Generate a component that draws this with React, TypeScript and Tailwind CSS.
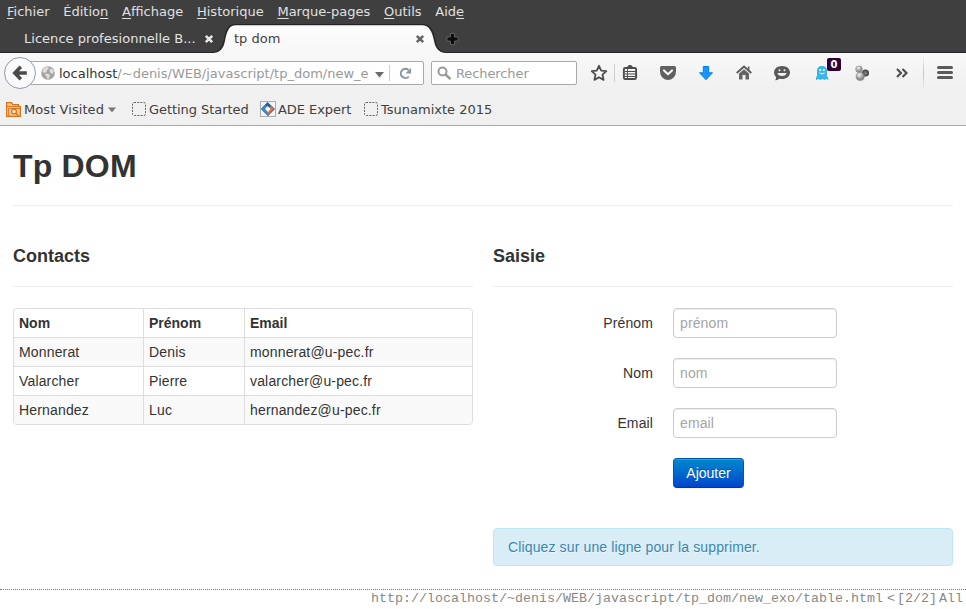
import React from "react";

const ui = "font-['DejaVu_Sans',sans-serif]";

function MenuItem({ before = "", hot, after = "" }: { before?: string; hot: string; after?: string }) {
  return (
    <span className="whitespace-nowrap">
      {before}
      <span className="underline underline-offset-2">{hot}</span>
      {after}
    </span>
  );
}

function CloseIcon({ color }: { color: string }) {
  return (
    <svg width="10" height="10" viewBox="0 0 10 10" className="shrink-0">
      <path d="M1.800 1.800L8.200 8.200M8.200 1.800L1.800 8.200" stroke={color} strokeWidth="2.600" />
    </svg>
  );
}

function TabStrip() {
  return (
    <div className="flex h-[29px] items-stretch">
      <div className="flex w-[214px] shrink-0 items-center pl-6 pt-px text-[#e4e4e4]">
        <span className="w-[181px] whitespace-nowrap tracking-[0.03px]">Licence profesionnelle B...</span>
        <CloseIcon color="#e8e8e8" />
      </div>
      <div className="grid w-[230px] shrink-0">
        <svg width="230" height="29" viewBox="0 0 230 29" className="col-start-1 row-start-1 overflow-visible">
          <defs>
            <linearGradient id="tab" x1="0" y1="0" x2="0" y2="1">
              <stop offset="0" stopColor="#fdfdfd" />
              <stop offset="1" stopColor="#f7f7f7" />
            </linearGradient>
          </defs>
          <path d="M-214 28.5H0C6 28.5 8.500 24 10 17C12 6 14 .7 22 .7H208C216 .7 219 6 221 17C222.500 24 225 28.500 231 28.500H752" fill="none" stroke="#242428" strokeWidth="1.2" />
          <path d="M0 29C7 28 9.500 24 11 17C13 7 15 1.200 22 1.200H208C215 1.200 218 7 220 17C221.500 24 224 28 231 29Z" fill="url(#tab)" />
        </svg>
        <div className="z-10 col-start-1 row-start-1 flex items-center pl-5 pt-px text-[#3f3f3f]">
          <span className="w-[181px]">tp dom</span>
          <CloseIcon color="#666" />
        </div>
      </div>
      <svg width="18" height="29" viewBox="0 0 18 29">
        <path d="M6.500 9.500h4v3.500h3.500v4h-3.500v3.500h-4v-3.500h-3.500v-4h3.500z" fill="#0c0c0c" stroke="#777" strokeWidth=".7" />
      </svg>
    </div>
  );
}

function Globe() {
  return (
    <svg width="14" height="14" viewBox="0 0 14 14" className="shrink-0">
      <circle cx="7" cy="7" r="6.800" fill="#a4a4a4" />
      <path d="M2 3.500L4 1.500L7 1L8 2.500L6 4L5.500 6L3.500 7L1.500 6ZM5 7.500L8 8L9 9.500L7.500 13L6 12.500L5.500 10L4 9ZM9 3L11.500 3L13 5.500L11.500 8L9.500 7L8.500 5Z" fill="#dedede" />
    </svg>
  );
}

function NavBar() {
  return (
    <div className="flex h-[40px] items-center pl-1">
      <div className="z-10 flex size-8 shrink-0 items-center justify-center rounded-full border border-[#8f9bab] bg-[#fafafa]">
        <svg width="16" height="16" viewBox="0 0 16 16">
          <path d="M8.800 1.800L2.800 8L8.800 14.200M3.500 8H14.800" fill="none" stroke="#4a4a4a" strokeWidth="3.500" strokeLinejoin="miter" />
        </svg>
      </div>
      <div className="-ml-4 flex h-6 w-[404px] shrink-0 items-center rounded-[2px] border border-[#a9a9a9] bg-white pl-5">
        <Globe />
        <span className="mt-px ml-1 w-[310px] whitespace-nowrap text-[#999]">
          <span className="text-[#333]">localhost</span>/~denis/WEB/javascript/tp_dom/new_e
        </span>
        <svg width="9" height="7" viewBox="0 0 9 7" className="ml-[6px] mt-[2px] shrink-0">
          <path d="M0 1H9L4.500 6.500Z" fill="#6a6a6a" />
        </svg>
        <span className="ml-[5px] h-4 w-px shrink-0 bg-[#ccc]" />
        <svg width="13" height="13" viewBox="0 0 13 13" className="ml-[9px] shrink-0">
          <path d="M9.800 9.600A4.600 4.600 0 1 1 9.500 3" fill="none" stroke="#8795a4" strokeWidth="2" />
          <path d="M12 .8V6.500H6.500Z" fill="#8795a4" />
        </svg>
      </div>
      <div className="ml-[7px] flex h-6 w-[146px] shrink-0 items-center rounded-[2px] border border-[#a9a9a9] bg-white pl-[5px]">
        <svg width="15" height="15" viewBox="0 0 15 15">
          <circle cx="5.500" cy="5.500" r="4" fill="none" stroke="#999" strokeWidth="2" />
          <path d="M8.500 8.500L13.500 13.200" stroke="#999" strokeWidth="2.500" />
        </svg>
        <span className="mt-px ml-1 text-[#999] tracking-[-0.1px]">Rechercher</span>
      </div>
      <svg width="18" height="18" viewBox="0 0 18 18" className="ml-[13px] shrink-0">
        <path d="M9 1.800L11.200 6.600L16.300 7.200L12.500 10.700L13.600 15.900L9 13.200L4.400 15.900L5.500 10.700L1.700 7.200L6.800 6.600Z" fill="#fafafa" stroke="#4d4d4d" strokeWidth="1.800" strokeLinejoin="round" />
      </svg>
      <span className="ml-[6px] h-[18px] w-px shrink-0 bg-[#cfcfcf]" />
      <svg width="16" height="18" viewBox="0 0 16 18" className="ml-[7px] shrink-0">
        <path d="M4 4L7 1H9L12 4" fill="#4d4d4d" />
        <rect x="1.900" y="4" width="12.200" height="11" rx="1.200" fill="#f5f5f5" stroke="#4d4d4d" strokeWidth="1.900" />
        <path d="M3 4.500H13M3 7.500H14M3 10H14M3 12.500H14" stroke="#4d4d4d" strokeWidth="1" />
        <path d="M5.500 5V15" stroke="#4d4d4d" strokeWidth=".9" />
      </svg>
      <svg width="18" height="18" viewBox="0 0 18 18" className="ml-[21px] shrink-0">
        <path d="M2.500 2H15.500Q17 2 17 3.500V7.500Q17 11.500 14.500 13.700Q12 16 9 16Q6 16 3.500 13.700Q1 11.500 1 7.500V3.500Q1 2 2.500 2Z" fill="#606060" />
        <path d="M5 6.500L9 10.200L13 6.500" fill="none" stroke="#f5f5f5" strokeWidth="2.200" strokeLinecap="round" strokeLinejoin="round" />
      </svg>
      <svg width="18" height="18" viewBox="0 0 18 18" className="ml-5 shrink-0">
        <path d="M6.300 2.500H11.700V8.800H15.500L9 15.700L2.500 8.800H6.300Z" fill="#1495ff" stroke="#087ce5" />
      </svg>
      <svg width="18" height="18" viewBox="0 0 18 18" className="ml-5 shrink-0">
        <path d="M1.700 9L9 2.500L16.300 9" fill="none" stroke="#595959" strokeWidth="1.800" />
        <path d="M12.800 2.500H14.500V7L12.800 5.500ZM4 9.500L9 5.300L14 9.500V15.500H10.500V11H7.500V15.500H4Z" fill="#666" />
      </svg>
      <svg width="18" height="18" viewBox="0 0 18 18" className="ml-5 shrink-0">
        <path d="M9 2C13.500 2 17 4.800 17 8.500C17 12.300 13.500 15 9 15Q7.500 15 6.300 14.700Q4.500 16.200 2 16.200Q3.500 14.700 3 13Q1 11.300 1 8.500C1 4.800 4.500 2 9 2Z" fill="#595959" />
        <path d="M4.300 9H13.700Q12.800 12 9 12Q5.200 12 4.300 9Z" fill="#f2f2f2" />
        <circle cx="6.500" cy="6.300" r="1" fill="#f2f2f2" />
        <circle cx="11.500" cy="6.300" r="1" fill="#f2f2f2" />
      </svg>
      <div className="relative ml-[22px] size-[18px] shrink-0">
        <svg width="18" height="18" viewBox="0 0 18 18">
          <path d="M4 7C4 3.500 6 2 9 2S14 3.500 14 7V12L15.300 14V16L13.300 15L11.600 16L9.500 15L7.500 16L5.500 15L3 16V13.500L4 12Z" fill="#38b6ea" />
          <circle cx="7.200" cy="6" r="1.100" fill="#fff" />
          <circle cx="10.800" cy="6" r="1.100" fill="#fff" />
          <path d="M6.500 8.800Q9 11.300 11.500 8.800" fill="none" stroke="#fff" strokeWidth="1" />
        </svg>
        <span className="absolute -top-[6px] left-[14px] flex h-[13px] w-[14px] items-center justify-center rounded-[2px] bg-[#300034] text-[10px] font-bold text-white">0</span>
      </div>
      <svg width="18" height="18" viewBox="0 0 18 18" className="ml-[22px] shrink-0">
        <defs>
          <radialGradient id="ball" cx=".4" cy=".3"><stop stopColor="#f7f7f7" /><stop offset="1" stopColor="#8c8c8c" /></radialGradient>
          <radialGradient id="dark"><stop stopColor="#888" /><stop offset="1" stopColor="#3a3a3a" /></radialGradient>
        </defs>
        <circle cx="12.500" cy="9" r="3.500" fill="url(#dark)" />
        <circle cx="6" cy="5.200" r="3.400" fill="url(#ball)" stroke="#999" strokeWidth=".5" />
        <circle cx="7.200" cy="12.500" r="4.100" fill="url(#ball)" stroke="#777" strokeWidth=".5" />
      </svg>
      <svg width="14" height="18" viewBox="0 0 14 18" className="ml-6 shrink-0">
        <path d="M2 5L6 9L2 13M7.500 5L11.500 9L7.500 13" fill="none" stroke="#4d4d4d" strokeWidth="2.100" />
      </svg>
      <span className="ml-[14px] h-9 w-px shrink-0 bg-linear-to-b from-transparent via-[#c4c4c4] to-transparent" />
      <div className="ml-[13px] flex w-4 shrink-0 flex-col gap-[2px] pb-px">
        <span className="h-[3px] rounded-full bg-[#5a5a5a]" />
        <span className="h-[3px] rounded-full bg-[#5a5a5a]" />
        <span className="h-[3px] rounded-full bg-[#5a5a5a]" />
      </div>
    </div>
  );
}

function BlankIcon() {
  return (
    <svg width="14" height="14" viewBox="0 0 14 14" className="shrink-0">
      <rect x=".5" y=".5" width="13" height="13" rx="1.500" fill="none" stroke="#666" strokeDasharray="2 1.200" />
    </svg>
  );
}

function Bookmarks() {
  return (
    <div className="flex h-[33px] items-center border-b border-[#a9a9a9] pl-[6px] text-[#404040]">
      <div className="flex w-[126px] shrink-0 items-center">
        <svg width="15" height="15" viewBox="0 0 15 15" className="shrink-0">
          <path d="M.6 14.400V.6H5.500L7 2.600H12.500V4.500H14.400V14.400Z" fill="#f9c48d" stroke="#d8721c" strokeWidth="1.200" />
          <path d="M.6 4.500H14M2.600 14V6.500H14" stroke="#d8721c" fill="none" strokeWidth=".9" />
          <circle cx="8" cy="9.500" r="2.400" fill="#fbe3c8" stroke="#d8721c" strokeWidth="1.200" />
          <path d="M10 11.500L12.500 14" stroke="#d8721c" strokeWidth="1.500" />
        </svg>
        <span className="mt-px ml-[3px] w-[84px] whitespace-nowrap tracking-[0.07px]">Most Visited</span>
        <svg width="8" height="6" viewBox="0 0 8 6" className="mt-[2px]"><path d="M0 .5H8L4 5.500Z" fill="#777" /></svg>
      </div>
      <div className="flex w-[128px] shrink-0 items-center gap-[3px] whitespace-nowrap tracking-[-0.06px]"><BlankIcon /><span className="mt-px">Getting Started</span></div>
      <div className="flex w-[104px] shrink-0 items-center gap-[2px] whitespace-nowrap tracking-[-0.06px]">
        <svg width="16" height="16" viewBox="0 0 16 16" className="shrink-0">
          <rect x=".5" y=".5" width="15" height="15" fill="#f4f4f4" stroke="#aaa" />
          <path d="M7.500 1L15 8L8 15L1 8Z" fill="#1d5fa8" />
          <path d="M1 8L8 15L10 12.500L5.500 8L7 5L4.500 4Z" fill="#3f83ca" />
          <path d="M11.500 5L14 8L8.500 13.500L6.800 12L10.500 8L9 6Z" fill="#dd6c35" />
          <path d="M7.500 5L10.700 8L8 11L5 8Z" fill="#fff" />
        </svg>
        <span className="mt-px">ADE Expert</span>
      </div>
      <div className="flex items-center gap-[3px] whitespace-nowrap"><BlankIcon /><span className="mt-px">Tsunamixte 2015</span></div>
    </div>
  );
}

const contacts = [
  ["Monnerat", "Denis", "monnerat@u-pec.fr"],
  ["Valarcher", "Pierre", "valarcher@u-pec.fr"],
  ["Hernandez", "Luc", "hernandez@u-pec.fr"],
];

function Contacts() {
  return (
    <section className="w-[460px]">
      <h2 className="h-[51px] border-b border-[#eee] text-[18px] leading-10 font-bold">Contacts</h2>
      <div className="mt-[21px] overflow-hidden rounded-[4px] border border-[#ddd]">
        <div className="grid h-7 grid-cols-[129px_101px_1fr] items-stretch leading-7 font-bold">
          <span className="pl-[5px]">Nom</span>
          <span className="border-l border-[#ddd] pl-[5px]">Prénom</span>
          <span className="border-l border-[#ddd] pl-[5px]">Email</span>
        </div>
        {contacts.map(([last, first, mail], i) => (
          <div key={last} className={`grid h-[29px] grid-cols-[129px_101px_1fr] border-t border-[#ddd] leading-7 tracking-[0.16px] ${i % 2 === 0 ? "bg-[#f9f9f9]" : "bg-white"}`}>
            <span className="pl-[5px]">{last}</span>
            <span className="border-l border-[#ddd] pl-[5px]">{first}</span>
            <span className="border-l border-[#ddd] pl-[5px]">{mail}</span>
          </div>
        ))}
      </div>
    </section>
  );
}

function Field({ label, placeholder }: { label: string; placeholder: string }) {
  return (
    <label className="flex h-[30px] items-center">
      <span className="w-[160px] text-right tracking-[0.12px]">{label}</span>
      <input placeholder={placeholder} className="ml-5 h-[30px] w-[164px] rounded-[4px] border border-[#ccc] bg-white px-[6px] text-[14px] tracking-[0.12px] shadow-[inset_0_1px_1px_rgba(0,0,0,0.075)] placeholder:text-[#a5a5a5]" />
    </label>
  );
}

function Entry() {
  return (
    <section className="w-[460px]">
      <h2 className="h-[51px] border-b border-[#eee] text-[18px] leading-10 font-bold">Saisie</h2>
      <form className="mt-[21px] flex flex-col gap-5">
        <Field label="Prénom" placeholder="prénom" />
        <Field label="Nom" placeholder="nom" />
        <Field label="Email" placeholder="email" />
        <button type="button" className="ml-[180px] h-[30px] w-[71px] rounded-[4px] border border-[#0055b3] border-b-[#003b91] bg-linear-to-b from-[#0088cc] to-[#0044cc] text-white shadow-[inset_0_1px_0_rgba(255,255,255,0.2),0_1px_2px_rgba(0,0,0,0.05)] [text-shadow:0_-1px_0_rgba(0,0,0,0.25)]">Ajouter</button>
      </form>
      <div className="mt-10 h-[38px] rounded-[4px] border border-[#bce8f1] bg-[#d9edf7] pl-[14px] leading-9 tracking-[0.13px] text-[#3a87ad] [text-shadow:0_1px_0_rgba(255,255,255,0.5)]">Cliquez sur une ligne pour la supprimer.</div>
    </section>
  );
}

export default function App() {
  return (
    <div className="flex h-[609px] w-[966px] flex-col overflow-hidden bg-white">
      <header className={`${ui} shrink-0 text-[13px] leading-4`}>
        <div className="bg-[#3f3f3f]">
          <nav className="flex h-6 items-center gap-[13.8px] pl-[7px] text-[#e0e0e0]">
            <MenuItem hot="F" after="ichier" />
            <MenuItem before="Éditio" hot="n" />
            <MenuItem hot="A" after="ffichage" />
            <MenuItem hot="H" after="istorique" />
            <MenuItem hot="M" after="arque-pages" />
            <MenuItem hot="O" after="utils" />
            <MenuItem before="Aid" hot="e" />
          </nav>
          <TabStrip />
        </div>
        <div className="bg-linear-to-b from-[#f8f8f8] to-[#f0f0f0] to-50%">
          <NavBar />
          <Bookmarks />
        </div>
      </header>
      <main className="flex-1 px-[13px] font-['Liberation_Sans',Arial,sans-serif] text-[14px] leading-5 text-[#333]">
        <h1 className="h-[80px] border-b border-[#eee] pt-5 text-[32px] leading-10 font-bold tracking-[0.18px]">Tp DOM</h1>
        <div className="flex gap-5 pt-[30px]">
          <Contacts />
          <Entry />
        </div>
      </main>
      <footer className="flex h-5 shrink-0 justify-end border-t border-dotted border-[#777] pr-[3px] font-['Liberation_Mono',monospace] text-[13.333px] leading-[18px] text-[#888]">
        <span>http://localhost/~denis/WEB/javascript/tp_dom/new_exo/table.html</span>
        <span className="ml-1">&lt;</span>
        <span className="ml-[2px]">[2/2]</span>
        <span className="ml-[2px]">All</span>
      </footer>
    </div>
  );
}
